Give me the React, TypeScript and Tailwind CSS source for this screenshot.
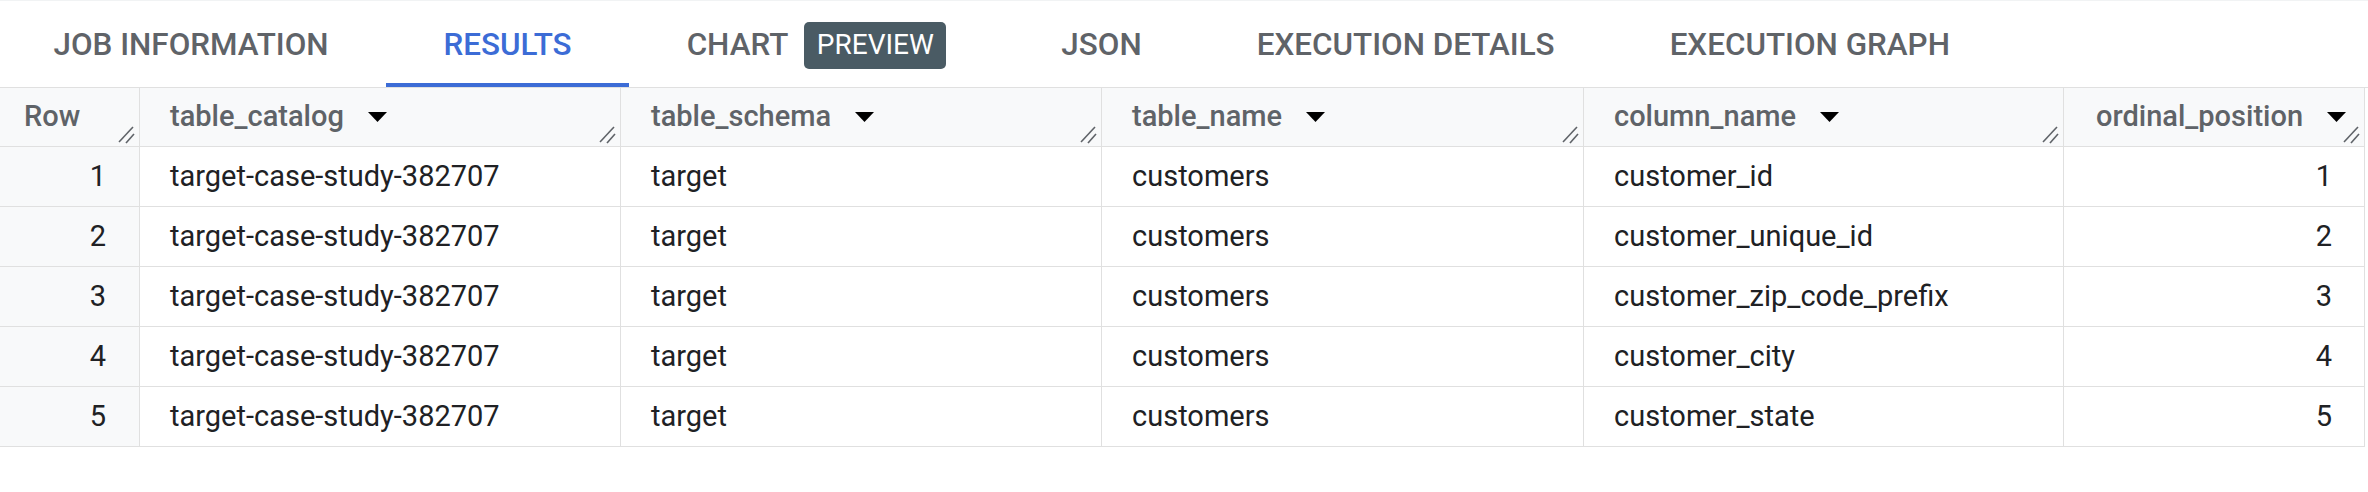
import React from "react";

const tabs = ["JOB INFORMATION", "RESULTS", "CHART", "JSON", "EXECUTION DETAILS", "EXECUTION GRAPH"];

const rows = [
  ["1", "target-case-study-382707", "target", "customers", "customer_id", "1"],
  ["2", "target-case-study-382707", "target", "customers", "customer_unique_id", "2"],
  ["3", "target-case-study-382707", "target", "customers", "customer_zip_code_prefix", "3"],
  ["4", "target-case-study-382707", "target", "customers", "customer_city", "4"],
  ["5", "target-case-study-382707", "target", "customers", "customer_state", "5"],
];

function Grip() {
  return (
    <svg className="absolute right-[3px] bottom-[2px]" width="20" height="20" viewBox="0 0 20 20">
      <line x1="17" y1="3" x2="3" y2="18" stroke="#5f6368" strokeWidth="1.6" />
      <line x1="18" y1="10" x2="10" y2="19" stroke="#5f6368" strokeWidth="1.6" />
    </svg>
  );
}

function SortArrow() {
  return (
    <svg className="ml-[24px]" width="19" height="10" viewBox="0 0 19 10">
      <polygon points="0,0 19,0 9.5,10" fill="#000" />
    </svg>
  );
}

export default function App() {
  return (
    <div className="w-[2368px] h-[492px] bg-white font-['Roboto',sans-serif] border-t border-[#f1f3f4]">
      <div className="flex h-[86px] -ml-[4px]">
        {tabs.map((t) => {
          const active = t === "RESULTS";
          return (
            <div
              key={t}
              className={
                active
                  ? "flex items-center px-[57.5px] pt-[6px] border-b-4 border-[#3c6cd6] text-[#3c6cd6] text-[31.4px] font-medium"
                  : "flex items-center px-[57.5px] pt-[6px] border-b-4 border-transparent text-[#5f6368] text-[31.4px] font-medium"
              }
            >
              <span>{t}</span>
              {t === "CHART" && (
                <span className="ml-[16px] h-[47px] px-[12.5px] flex items-center rounded-[5px] bg-[#4a5b64] text-white text-[28px] font-normal">
                  PREVIEW
                </span>
              )}
            </div>
          );
        })}
      </div>

      <div className="grid grid-cols-[140px_481px_481px_482px_480px_301px] border-t border-[#e0e0e0] text-[29px]">
        <div className="relative h-[59px] flex items-center pl-[24px] bg-[#f8f9fa] border-r border-b border-[#e0e0e0] text-[#5f6368] font-medium">
          Row
          <Grip />
        </div>
        {["table_catalog", "table_schema", "table_name", "column_name", "ordinal_position"].map((h, i) => (
          <div
            key={h}
            className={
              i === 4
                ? "relative h-[59px] flex items-center pl-[32px] bg-[#f8f9fa] border-r border-b border-[#e0e0e0] text-[#5f6368] font-medium"
                : "relative h-[59px] flex items-center pl-[30px] bg-[#f8f9fa] border-r border-b border-[#e0e0e0] text-[#5f6368] font-medium"
            }
          >
            {h}
            <SortArrow />
            <Grip />
          </div>
        ))}

        {rows.map((r) => (
          <React.Fragment key={r[0]}>
            <div className="h-[60px] flex items-center justify-end pr-[33px] bg-[#f8f9fa] border-r border-b border-[#e0e0e0] text-[#202124]">
              {r[0]}
            </div>
            {r.slice(1, 5).map((c, j) => (
              <div key={j} className="h-[60px] flex items-center pl-[30px] border-r border-b border-[#e0e0e0] text-[#202124]">
                {c}
              </div>
            ))}
            <div className="h-[60px] flex items-center justify-end pr-[32px] border-r border-b border-[#e0e0e0] text-[#202124]">
              {r[5]}
            </div>
          </React.Fragment>
        ))}
      </div>
    </div>
  );
}
